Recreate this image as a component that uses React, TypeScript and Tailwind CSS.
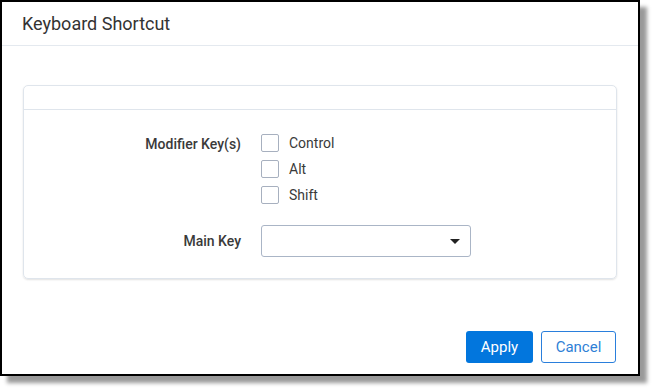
import React from "react";

const MODIFIERS = ["Control", "Alt", "Shift"];

function Checkbox({ label }: { label: string }) {
  return (
    <label className="flex h-[26px] items-center gap-[10px]">
      <span className="h-[18px] w-[18px] rounded-[2px] border border-[#a7b0bf] bg-white" />
      <span className="text-[14px] text-[#3a3a3a]">{label}</span>
    </label>
  );
}

export default function App() {
  return (
    <div className="h-[391px] w-[655px] bg-white" style={{ fontFamily: "Roboto, 'Liberation Sans', sans-serif" }}>
      <div className="flex h-[376px] w-[640px] flex-col border-2 border-black bg-white shadow-[7px_7px_4px_rgba(0,0,0,0.4)]">
        {/* header */}
        <div className="flex h-[44px] items-center border-b border-[#e4e9ef] px-[20px]">
          <h1 className="text-[18px] text-[#333]">Keyboard Shortcut</h1>
        </div>

        {/* body */}
        <div className="flex-1 px-[21px] pt-[39px]">
          <div className="rounded-[5px] border border-[#dfe5ec] shadow-[0_1px_2px_rgba(0,0,0,0.12)]">
            <div className="h-[24px] border-b border-[#dfe5ec]" />
            <div className="pb-[21px] pt-[20px]">
              <div className="flex">
                <div className="w-[217px] pt-[4px] text-right text-[14px] font-medium text-[#3a3a3a]">Modifier Key(s)</div>
                <div className="ml-[20px] flex flex-col">
                  {MODIFIERS.map((m) => (
                    <Checkbox key={m} label={m} />
                  ))}
                </div>
              </div>
              <div className="mt-[17px] flex items-center">
                <div className="w-[217px] text-right text-[14px] font-medium text-[#3a3a3a]">Main Key</div>
                <div className="ml-[20px] flex h-[32px] w-[210px] items-center justify-end rounded-[3px] border border-[#aab5c6] bg-white pr-[10px]">
                  <svg width="10" height="5" viewBox="0 0 10 5">
                    <path d="M0 0h10L5 5z" fill="#222" />
                  </svg>
                </div>
              </div>
            </div>
          </div>
        </div>

        {/* footer */}
        <div className="flex justify-end gap-[8px] px-[22px] pb-[11px]">
          <button className="h-[32px] w-[67px] rounded-[3px] bg-[#0276dd] text-[15px] text-white">Apply</button>
          <button className="h-[32px] w-[75px] rounded-[3px] border border-[#2a7fdc] bg-white text-[15px] text-[#2f7fd6]">Cancel</button>
        </div>
      </div>
    </div>
  );
}
